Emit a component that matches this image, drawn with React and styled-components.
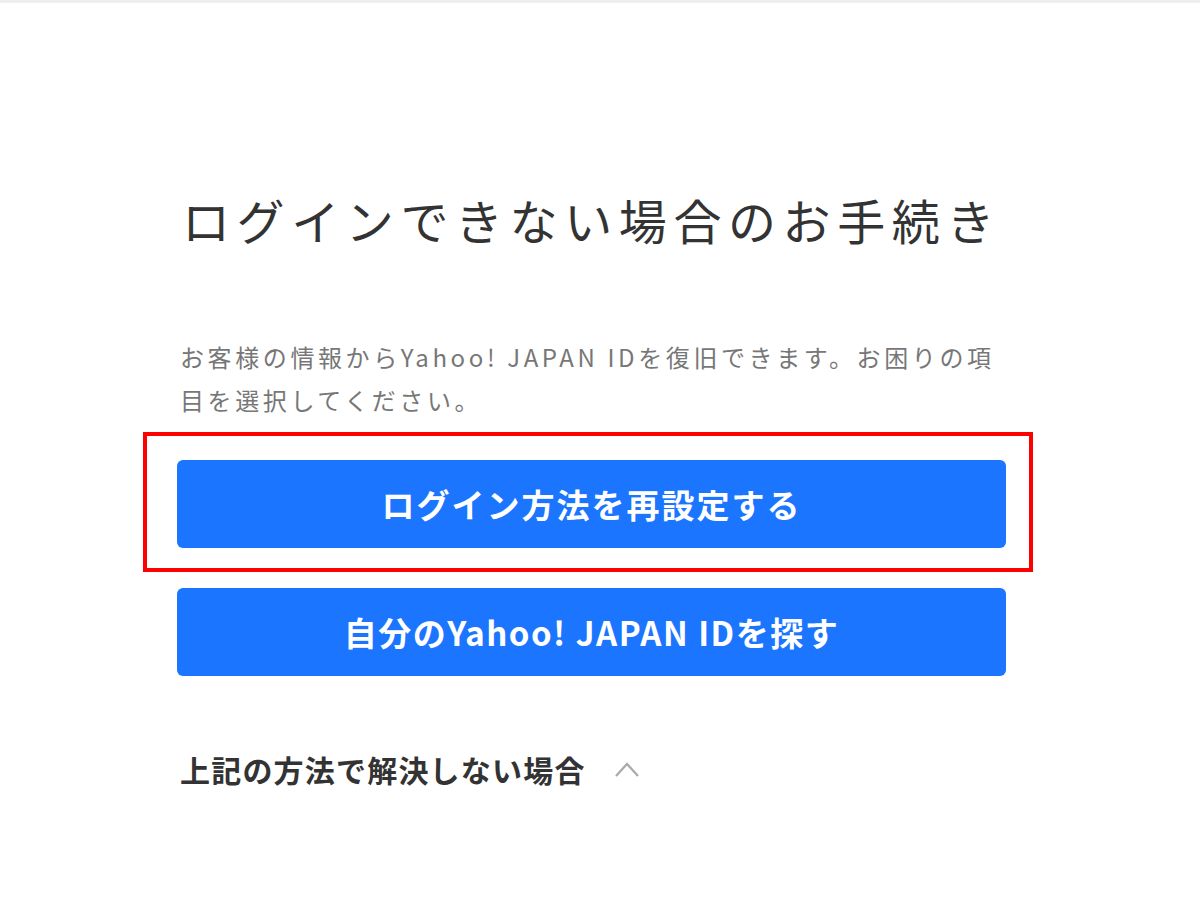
import React from 'react'
import styled, { createGlobalStyle } from 'styled-components'

const GlobalStyle = createGlobalStyle`
  html, body {
    margin: 0;
    padding: 0;
    background: #fff;
  }
  body {
    font-family: "Noto Sans CJK JP", "Noto Sans", sans-serif;
  }
`

const Page = styled.div`
  width: 1200px;
  height: 901px;
  border-top: 3px solid #eeeeee;
  box-sizing: border-box;
  overflow: hidden;
`

const Content = styled.main`
  width: 830px;
  margin-left: 177px;
  padding-top: 176px;
  display: flex;
  flex-direction: column;
`

const Title = styled.h1`
  margin: 0 0 0 5px;
  font-size: 48px;
  font-weight: 400;
  color: #333;
  line-height: 80px;
  letter-spacing: 6.6px;
  white-space: nowrap;
`

const Lead = styled.p`
  margin: 76px 0 0 3px;
  font-size: 24px;
  line-height: 43px;
  color: #777;
  letter-spacing: 3.6px;
  white-space: nowrap;
`

const Highlight = styled.div`
  margin: 11px 0 0 -34px;
  width: 890px;
  height: 140px;
  box-sizing: border-box;
  border: 4px solid #ff0000;
  padding: 24px 0 0 30px;
`

const Button = styled.button`
  display: flex;
  align-items: center;
  justify-content: center;
  width: 829px;
  height: 88px;
  border: none;
  border-radius: 6px;
  background: #1b75ff;
  color: #fff;
  font-family: "Noto Sans CJK JP", "Noto Sans", sans-serif;
  font-size: 33px;
  font-weight: 700;
  letter-spacing: ${props => props.$spacing || 0}px;
  cursor: pointer;
  margin-top: ${props => props.$gap || 0}px;
`

const More = styled.div`
  display: flex;
  align-items: center;
  gap: 28px;
  margin: 71px 0 0 3px;
  font-size: 30px;
  font-weight: 700;
  color: #333;
  letter-spacing: 1.2px;
`

const Chevron = () => (
  <svg width="26" height="20" viewBox="0 0 26 20" fill="none">
    <path d="M2 17 L13 5 L24 17" stroke="#aaa" strokeWidth="2.2" />
  </svg>
)

export default function App() {
  return (
    <Page>
      <GlobalStyle />
      <Content>
        <Title>ログインできない場合のお手続き</Title>
        <Lead>
          お客様の情報からYahoo! JAPAN IDを復旧できます。お困りの項
          <br />
          目を選択してください。
        </Lead>
        <Highlight>
          <Button $spacing={2}>ログイン方法を再設定する</Button>
        </Highlight>
        <Button $gap={16} $spacing={1.5}>自分のYahoo! JAPAN IDを探す</Button>
        <More>
          上記の方法で解決しない場合
          <Chevron />
        </More>
      </Content>
    </Page>
  )
}
